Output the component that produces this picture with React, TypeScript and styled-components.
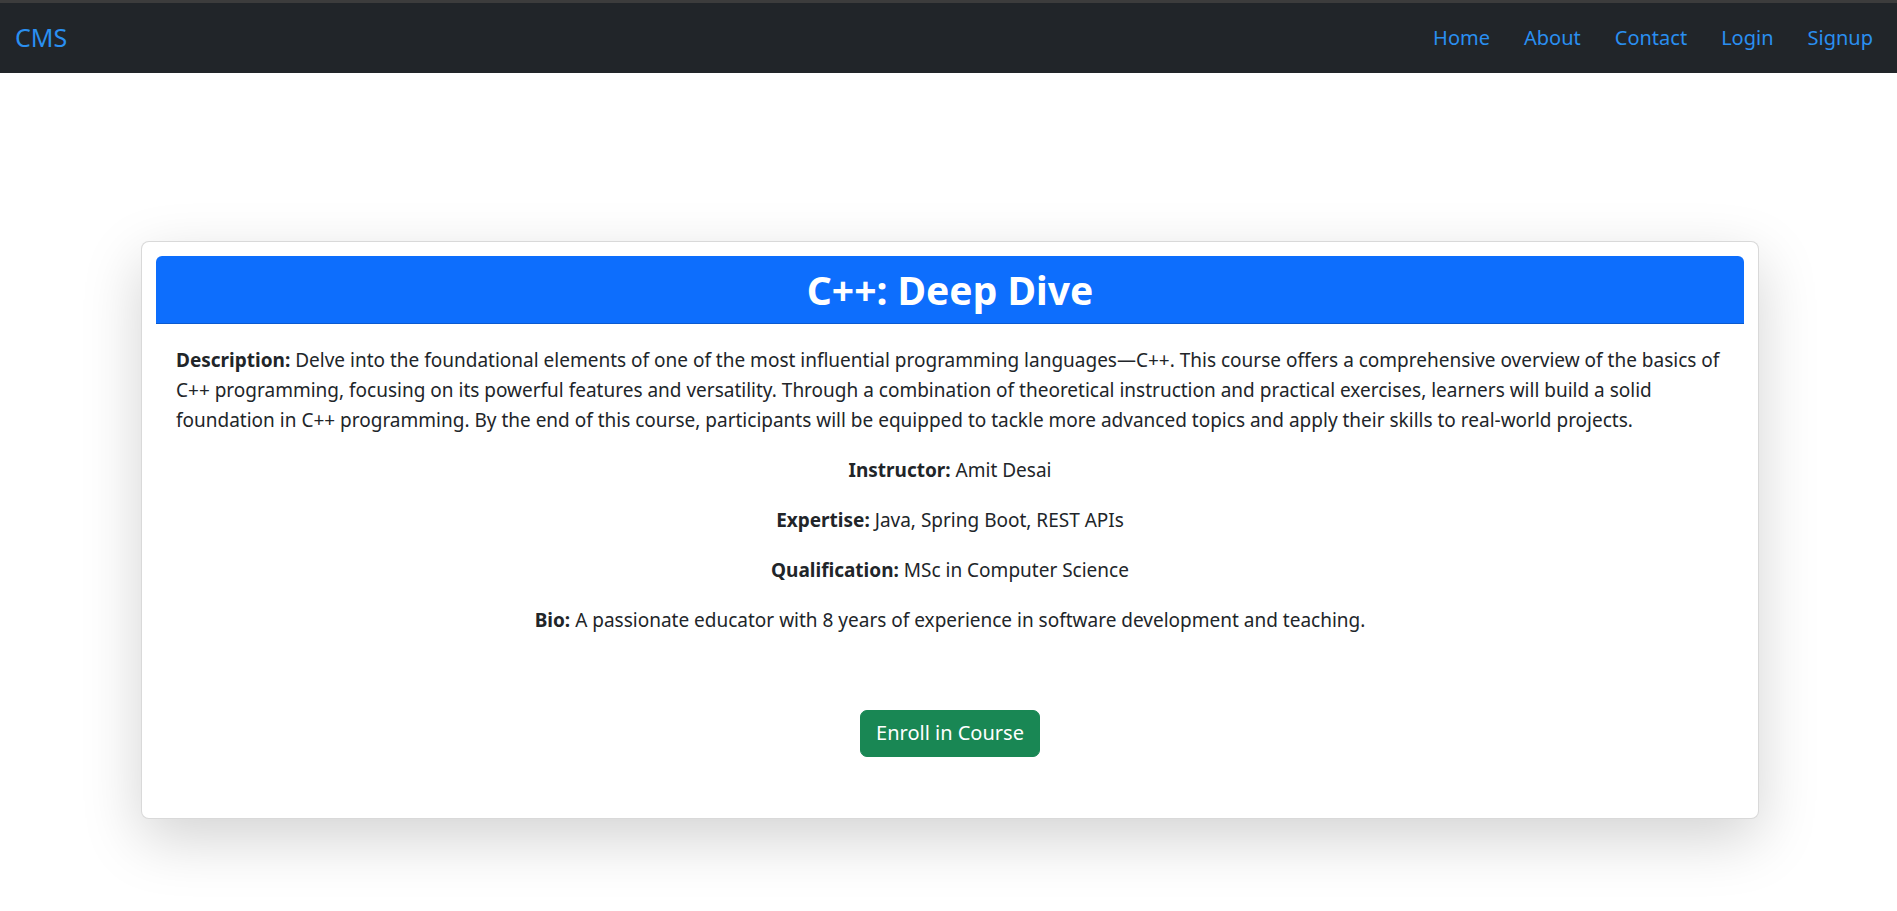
import React from "react";
import styled, { createGlobalStyle } from "styled-components";

const GlobalStyle = createGlobalStyle`
  * { box-sizing: border-box; }
  body {
    margin: 0;
    background: #fff;
    color: #212529;
    font-family: "Noto Sans", "Open Sans", sans-serif;
    font-size: 19px;
    line-height: 30px;
  }
`;

const links = ["Home", "About", "Contact", "Login", "Signup"];

const App: React.FC = () => {
  return (
    <>
      <GlobalStyle />
      <Nav>
        <Brand href="#">CMS</Brand>
        <NavLinks>
          {links.map((l) => (
            <li key={l}>
              <NavLink href="#">{l}</NavLink>
            </li>
          ))}
        </NavLinks>
      </Nav>

      <Container>
        <Card>
          <CardHeader>
            <Title>C++: Deep Dive</Title>
          </CardHeader>
          <CardBody>
            <Para>
              <b>Description:</b> Delve into the foundational elements of one of the most
              influential programming languages—C++. This course offers a comprehensive
              overview of the basics of C++ programming, focusing on its powerful features
              and versatility. Through a combination of theoretical instruction and
              practical exercises, learners will build a solid
              <br />
              foundation in C++ programming. By the end of this course, participants will
              be equipped to tackle more advanced topics and apply their skills to
              real-world projects.
            </Para>
            <Para center>
              <b>Instructor:</b> Amit Desai
            </Para>
            <Para center>
              <b>Expertise:</b> Java, Spring Boot, REST APIs
            </Para>
            <Para center>
              <b>Qualification:</b> MSc in Computer Science
            </Para>
            <Para center>
              <b>Bio:</b> A passionate educator with 8 years of experience in software
              development and teaching.
            </Para>
            <Actions>
              <EnrollButton>Enroll in Course</EnrollButton>
            </Actions>
          </CardBody>
        </Card>
      </Container>
    </>
  );
};

export default App;

const Nav = styled.nav`
  height: 73px;
  border-top: 3px solid #3c3c3c;
  background: #212529;
  display: flex;
  align-items: center;
  justify-content: space-between;
  padding: 0 24px 0 15px;
`;

const Brand = styled.a`
  font-size: 25px;
  color: #2a8ff0;
  text-decoration: none;
  line-height: 1;
  margin-top: -2px;
`;

const NavLinks = styled.ul`
  display: flex;
  list-style: none;
  margin: 0;
  padding: 0;
  gap: 34px;
`;

const NavLink = styled.a`
  color: #2a8ff0;
  text-decoration: none;
  font-size: 20px;
`;

const Container = styled.div`
  padding: 168px 138px 92px 141px;
`;

const Card = styled.div`
  background: #fff;
  border: 1px solid rgba(0, 0, 0, 0.15);
  border-radius: 8px;
  box-shadow: 0 20px 60px rgba(0, 0, 0, 0.175);
  padding: 14px;
`;

const CardHeader = styled.div`
  background: #0d6efd;
  border-radius: 6px 6px 0 0;
  border-bottom: 1px solid rgba(0, 0, 0, 0.175);
  padding: 10px 20px 10px;
  text-align: center;
`;

const Title = styled.h2`
  margin: 0;
  color: #fff;
  font-size: 39px;
  font-weight: 700;
  line-height: 47px;
`;

const CardBody = styled.div`
  padding: 21px 20px 47px;
`;

const Para = styled.p<{ center?: boolean }>`
  margin: 0 0 20px;
  text-align: ${(p) => (p.center ? "center" : "left")};
  b { font-weight: 700; }
`;

const Actions = styled.div`
  display: flex;
  justify-content: center;
  margin-top: 75px;
`;

const EnrollButton = styled.button`
  font-family: inherit;
  font-size: 20px;
  line-height: 30px;
  color: #fff;
  background: #198754;
  border: 1px solid #198754;
  border-radius: 7px;
  padding: 7px 15px 8px;
  cursor: pointer;
`;
